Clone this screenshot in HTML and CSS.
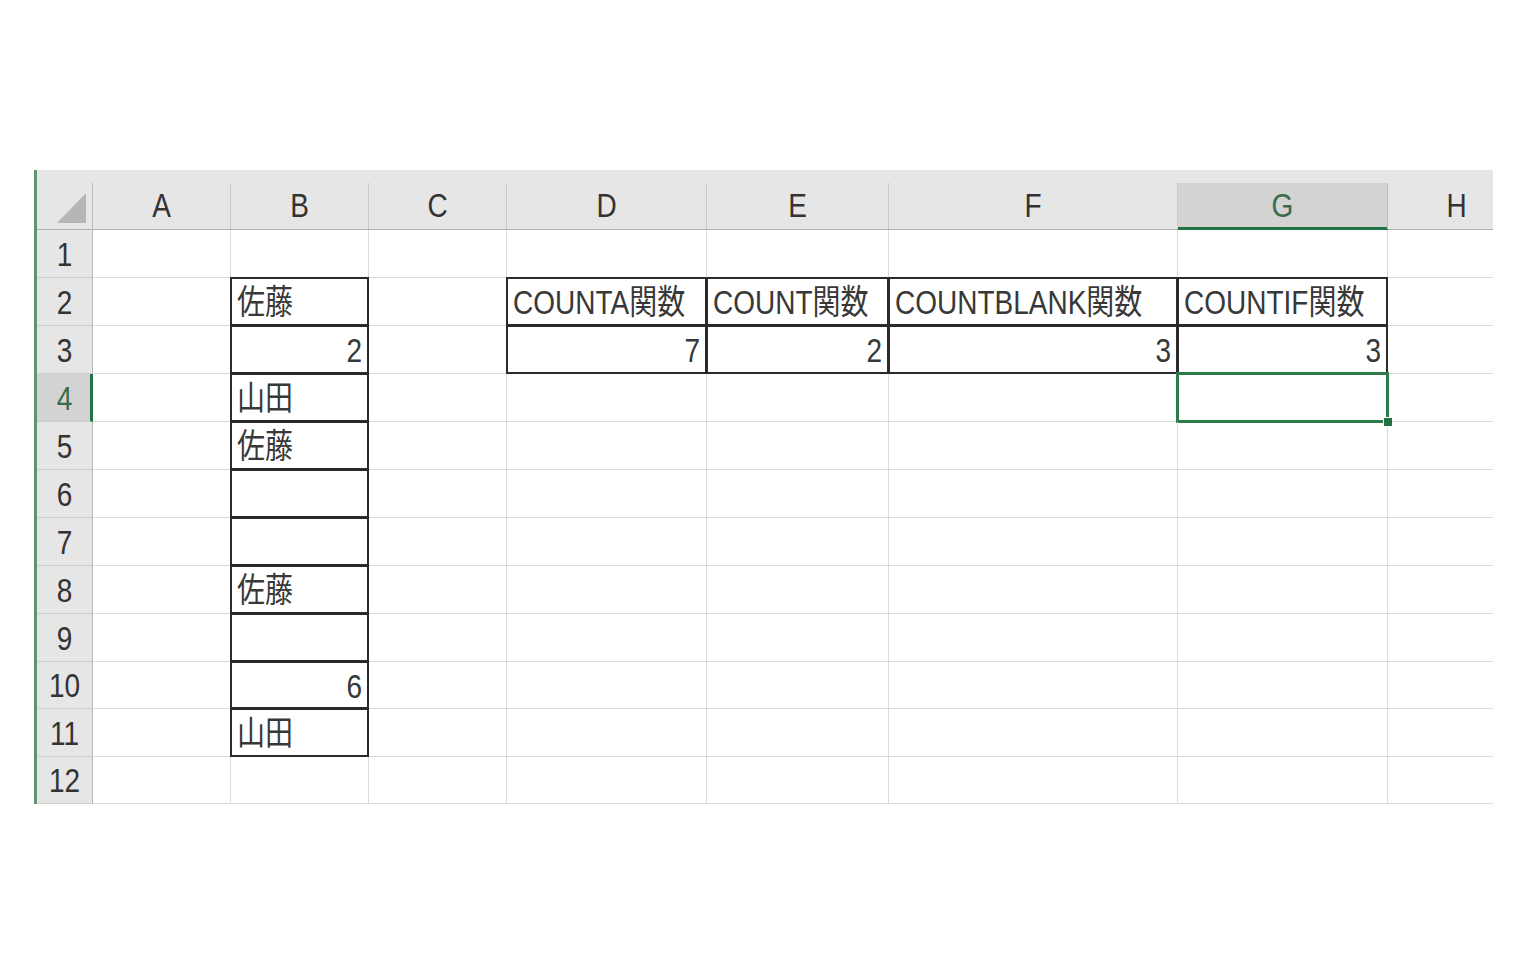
FILE: index.html
```html
<!DOCTYPE html>
<html lang="ja">
<head>
<meta charset="utf-8">
<title>Sheet</title>
<link rel="stylesheet" href="styles.css">
</head>
<body>
<div class="sheet">
  <div class="ch corner"><div class="in"><span class="tri"></span></div></div>
  <div class="ch"><div class="in"><span class="t">A</span></div></div>
  <div class="ch"><div class="in"><span class="t">B</span></div></div>
  <div class="ch"><div class="in"><span class="t">C</span></div></div>
  <div class="ch"><div class="in"><span class="t">D</span></div></div>
  <div class="ch"><div class="in"><span class="t">E</span></div></div>
  <div class="ch"><div class="in"><span class="t">F</span></div></div>
  <div class="ch sel"><div class="in"><span class="t">G</span></div></div>
  <div class="ch"><div class="in"><span class="t">H</span></div></div>

  <div class="rh"><span class="t">1</span></div>
  <div class="c"></div><div class="c"></div><div class="c"></div><div class="c"></div><div class="c"></div><div class="c"></div><div class="c"></div><div class="c"></div>

  <div class="rh"><span class="t">2</span></div>
  <div class="c"></div><div class="c bx"><span class="t">佐藤</span></div><div class="c"></div><div class="c bx"><span class="t">COUNTA関数</span></div><div class="c bx"><span class="t">COUNT関数</span></div><div class="c bx"><span class="t">COUNTBLANK関数</span></div><div class="c bx"><span class="t">COUNTIF関数</span></div><div class="c"></div>

  <div class="rh"><span class="t">3</span></div>
  <div class="c"></div><div class="c bx r"><span class="t">2</span></div><div class="c"></div><div class="c bx r"><span class="t">7</span></div><div class="c bx r"><span class="t">2</span></div><div class="c bx r"><span class="t">3</span></div><div class="c bx r"><span class="t">3</span></div><div class="c"></div>

  <div class="rh sel"><span class="t">4</span></div>
  <div class="c"></div><div class="c bx"><span class="t">山田</span></div><div class="c"></div><div class="c"></div><div class="c"></div><div class="c"></div><div class="c act"><span class="handle"></span></div><div class="c"></div>

  <div class="rh"><span class="t">5</span></div>
  <div class="c"></div><div class="c bx"><span class="t">佐藤</span></div><div class="c"></div><div class="c"></div><div class="c"></div><div class="c"></div><div class="c"></div><div class="c"></div>

  <div class="rh"><span class="t">6</span></div>
  <div class="c"></div><div class="c bx"></div><div class="c"></div><div class="c"></div><div class="c"></div><div class="c"></div><div class="c"></div><div class="c"></div>

  <div class="rh"><span class="t">7</span></div>
  <div class="c"></div><div class="c bx"></div><div class="c"></div><div class="c"></div><div class="c"></div><div class="c"></div><div class="c"></div><div class="c"></div>

  <div class="rh"><span class="t">8</span></div>
  <div class="c"></div><div class="c bx"><span class="t">佐藤</span></div><div class="c"></div><div class="c"></div><div class="c"></div><div class="c"></div><div class="c"></div><div class="c"></div>

  <div class="rh"><span class="t">9</span></div>
  <div class="c"></div><div class="c bx"></div><div class="c"></div><div class="c"></div><div class="c"></div><div class="c"></div><div class="c"></div><div class="c"></div>

  <div class="rh"><span class="t">10</span></div>
  <div class="c"></div><div class="c bx r"><span class="t">6</span></div><div class="c"></div><div class="c"></div><div class="c"></div><div class="c"></div><div class="c"></div><div class="c"></div>

  <div class="rh"><span class="t">11</span></div>
  <div class="c"></div><div class="c bx"><span class="t">山田</span></div><div class="c"></div><div class="c"></div><div class="c"></div><div class="c"></div><div class="c"></div><div class="c"></div>

  <div class="rh"><span class="t">12</span></div>
  <div class="c"></div><div class="c"></div><div class="c"></div><div class="c"></div><div class="c"></div><div class="c"></div><div class="c"></div><div class="c"></div>
</div>
</body>
</html>
```
FILE: styles.css
```css
* { box-sizing: border-box; }
html, body { margin: 0; padding: 0; background: #ffffff; }
body {
  font-family: "Liberation Sans", "Noto Sans CJK JP", sans-serif;
  color: #383838;
}
.sheet {
  margin: 170px 0 0 34px;
  width: 1459px;
  overflow: hidden;
  border-left: 3px solid #5f9470;
  display: grid;
  grid-template-columns: 56px 138px 138px 138px 200px 182px 289px 210px 138px;
  grid-template-rows: 60px repeat(9, 48px) 47px 48px 47px;
}
.t {
  display: inline-block;
  font-size: 28px;
  line-height: 1;
  transform: scaleY(1.2);
  white-space: nowrap;
}
/* column headers */
.ch {
  background: #e6e6e6;
  padding-top: 13px;
  border-bottom: 1px solid #b1b1b1;
}
.ch .in {
  height: 100%;
  border-right: 1px solid #c9c9c9;
  display: flex;
  align-items: center;
  justify-content: center;
  color: #333333;
}
.ch.sel { border-bottom-color: #217346; }
.ch.sel .in {
  background: #d3d3d3;
  color: #3b6b4b;
  box-shadow: inset 0 -2px 0 #217346;
  border-right-color: #bdbdbd;
}
.corner .in {
  justify-content: flex-end;
  align-items: flex-end;
  padding: 0 6px 6px 0;
  border-right-color: #bdbdbd;
}
.tri {
  width: 29px;
  height: 30px;
  background: #b6b6b6;
  clip-path: polygon(100% 0, 100% 100%, 0 100%);
}
/* row headers */
.rh {
  background: #e6e6e6;
  border-right: 1px solid #b8b8b8;
  border-bottom: 1px solid #cdcdcd;
  display: flex;
  align-items: center;
  justify-content: center;
  padding-top: 2px;
  color: #333333;
}
.rh.sel {
  background: #d3d3d3;
  border-right: 3px solid #217346;
  color: #3b6b4b;
  padding-left: 2px;
}
/* cells */
.c {
  position: relative;
  border-right: 1px solid #dadada;
  border-bottom: 1px solid #dadada;
  display: flex;
  align-items: center;
  padding: 3px 5px 0 6px;
}
.c.r { justify-content: flex-end; padding-right: 6px; }
.bx::after {
  content: "";
  position: absolute;
  top: -1px;
  left: -1px;
  right: -1px;
  bottom: -1px;
  border: 2px solid #2a2a2a;
  pointer-events: none;
}
.act::after {
  content: "";
  position: absolute;
  top: -2px;
  left: -2px;
  right: -2px;
  bottom: -2px;
  border: 3px solid #2f7a4a;
}
.handle {
  position: absolute;
  right: -5px;
  bottom: -5px;
  width: 8px;
  height: 8px;
  background: #217346;
  outline: 1px solid #ffffff;
  z-index: 2;
}
```
